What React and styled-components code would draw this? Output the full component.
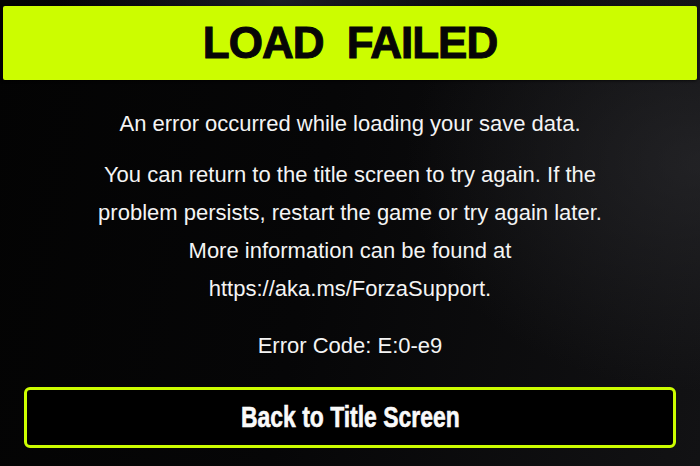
import React from 'react'
import styled, { createGlobalStyle } from 'styled-components'

const GlobalStyle = createGlobalStyle`
  html, body {
    margin: 0;
    padding: 0;
    background: #050506;
  }
  * {
    box-sizing: border-box;
  }
`

const Screen = styled.div`
  width: 700px;
  height: 466px;
  overflow: hidden;
  display: flex;
  flex-direction: column;
  padding: 6px 3px 0;
  font-family: "Liberation Sans", Arial, sans-serif;
  color: #f4f4f4;
  background:
    radial-gradient(ellipse 60% 70% at 100% 35%, rgba(48, 48, 52, 0.55), rgba(0, 0, 0, 0) 70%),
    radial-gradient(ellipse 40% 20% at 40% 0%, rgba(40, 44, 56, 0.6), rgba(0, 0, 0, 0) 80%),
    linear-gradient(100deg, #030303 0%, #060607 45%, #121214 100%);
`

const Banner = styled.header`
  height: 74px;
  flex: none;
  display: flex;
  align-items: center;
  justify-content: center;
  background: #ccfd00;
  border-radius: 2px;
  box-shadow: 0 1px 3px rgba(0, 0, 0, 0.6);
`

const Title = styled.h1`
  margin: 0;
  font-family: "Liberation Sans", Arial, sans-serif;
  font-weight: 700;
  font-size: 44px;
  letter-spacing: -1px;
  word-spacing: 12px;
  color: #060606;
  -webkit-text-stroke: 1px #060606;
  line-height: 1;
`

const Message = styled.section`
  display: flex;
  flex-direction: column;
  align-items: center;
  text-align: center;
  padding-top: 25px;
  font-size: 22px;
  line-height: 38px;
`

const Para = styled.p`
  margin: ${p => p.$gap || 0}px 0 0;
`

const BackButton = styled.button`
  margin: 22px 21px 0 21px;
  height: 61px;
  flex: none;
  display: flex;
  align-items: center;
  justify-content: center;
  background: #000;
  border: 3px solid #ccfd00;
  border-radius: 6px;
  cursor: pointer;
`

// bold label squeezed into a condensed look
const ButtonLabel = styled.span`
  display: inline-block;
  transform: scaleX(0.79);
  color: #fafafa;
  font-family: "Liberation Sans", Arial, sans-serif;
  font-weight: 700;
  font-size: 29px;
  -webkit-text-stroke: 0.6px #fafafa;
  white-space: nowrap;
`

export default function App() {
  return (
    <>
      <GlobalStyle />
      <Screen>
        <Banner>
          <Title>LOAD FAILED</Title>
        </Banner>
        <Message>
          <Para>An error occurred while loading your save data.</Para>
          <Para $gap={13}>
            You can return to the title screen to try again. If the<br />
            problem persists, restart the game or try again later.<br />
            More information can be found at<br />
            https://aka.ms/ForzaSupport.
          </Para>
          <Para $gap={19}>Error Code: E:0-e9</Para>
        </Message>
        <BackButton>
          <ButtonLabel>Back to Title Screen</ButtonLabel>
        </BackButton>
      </Screen>
    </>
  )
}
